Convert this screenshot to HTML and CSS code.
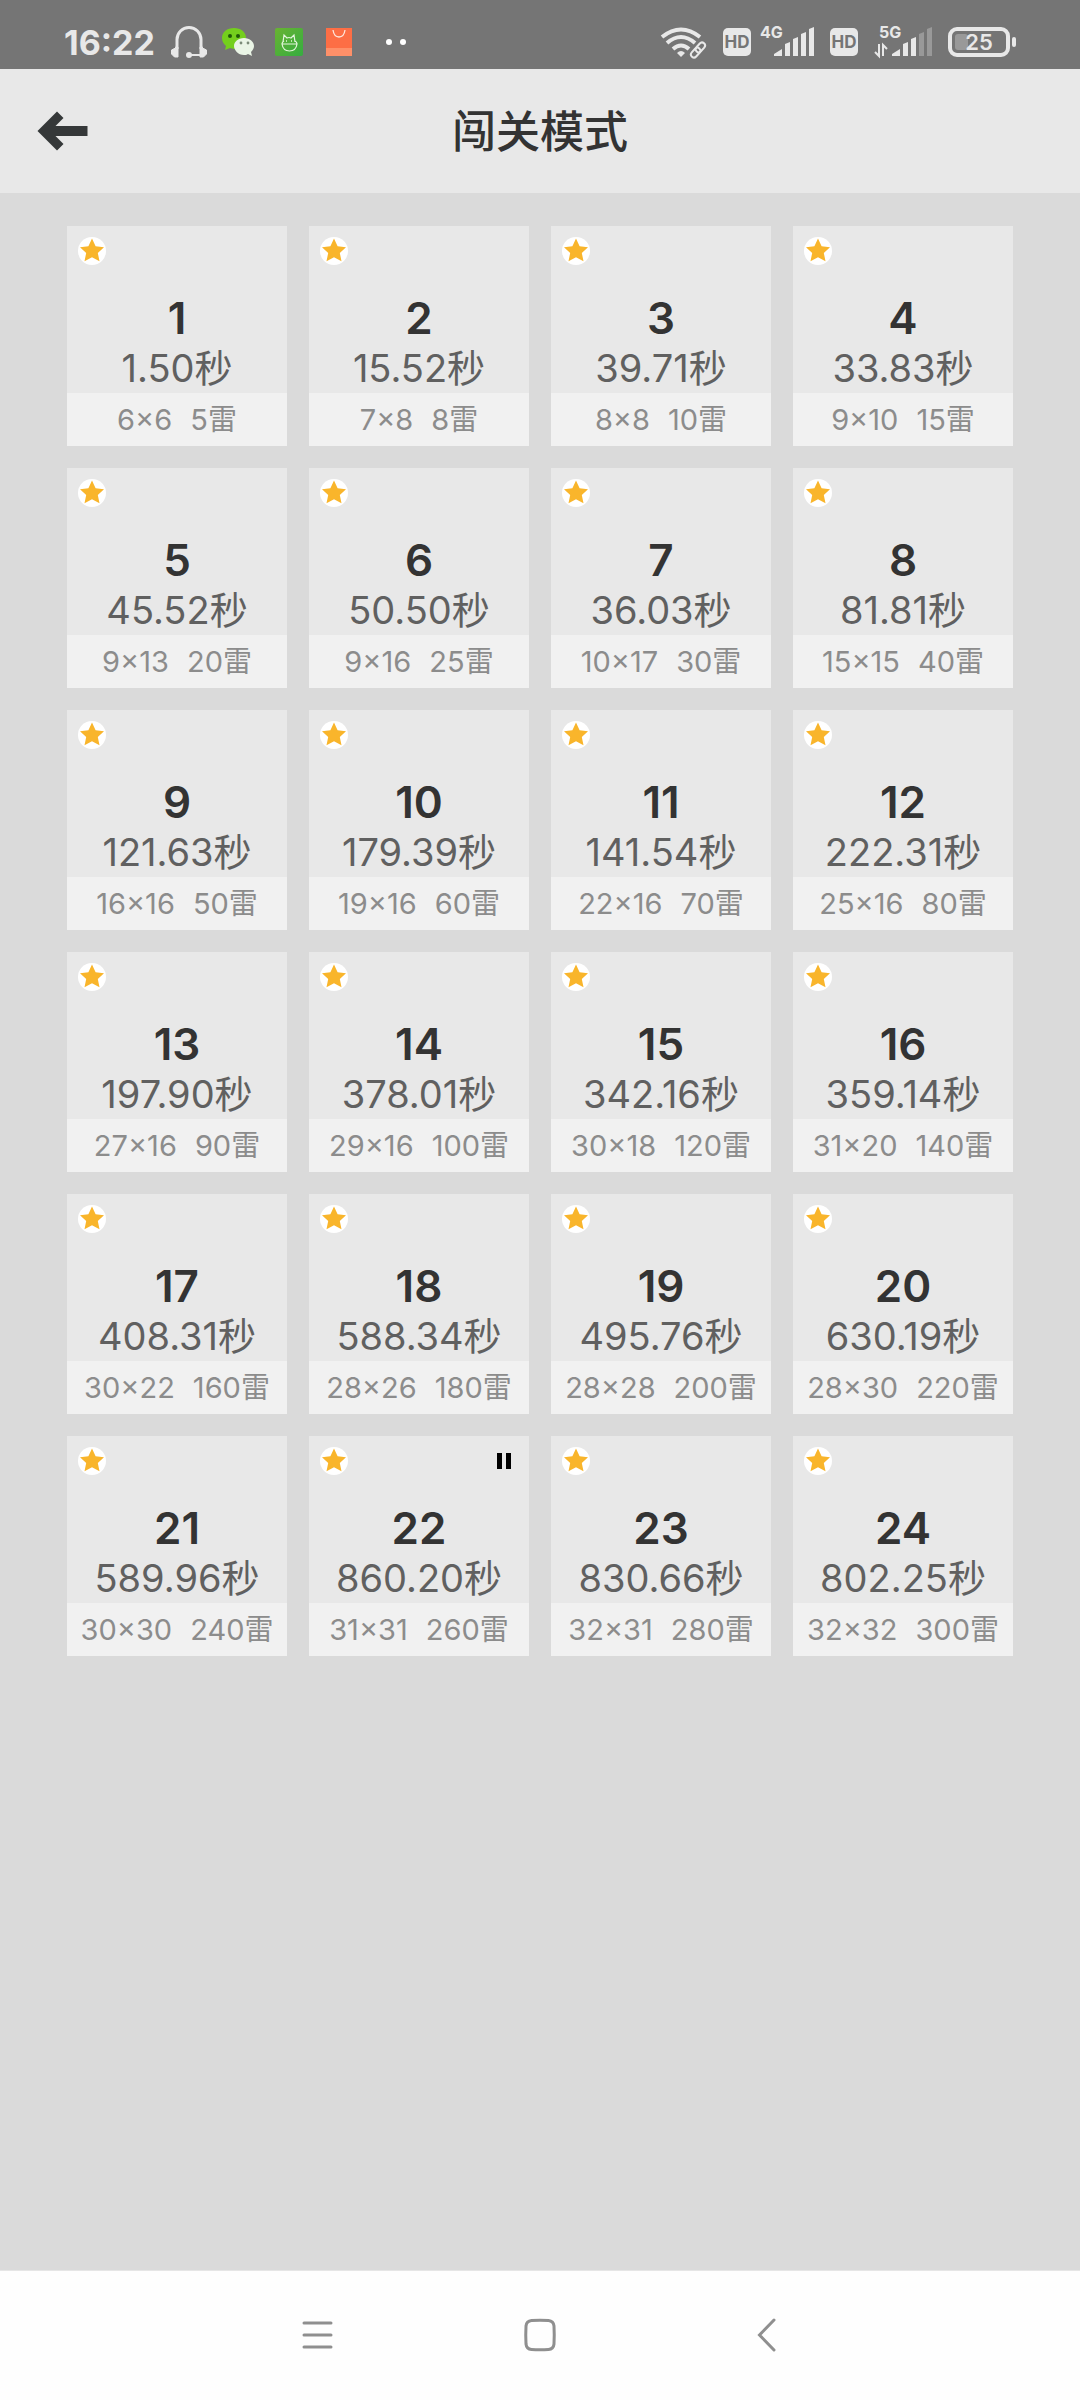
FILE: index.html
```html
<!DOCTYPE html>
<html lang="zh-CN">
<head>
  <meta charset="UTF-8" />
  <meta name="viewport" content="width=device-width, initial-scale=1.0"/>
  <title>闯关模式</title>
  <link rel="stylesheet" href="styles.css">
</head>
<body>
  <div class="status-bar">
    <div class="status-left">
      <span class="clock">16:22</span>
      <!-- headset -->
      <svg width="36" height="34" viewBox="0 0 36 34">
        <path d="M6 24V14.500a12 12 0 0 1 24 0V24" fill="none" stroke="#e8e8e8" stroke-width="3"/>
        <path d="M4.500 22H7v10H3.500L0.500 29v-4l4-2zM31.500 22H29v10h3.500l3-3v-4l-4-2z" fill="#e8e8e8" stroke="#e8e8e8" stroke-linejoin="round"/>
        <path d="M18 30h13" stroke="#e8e8e8" stroke-width="2"/>
        <circle cx="18" cy="30" r="3" fill="#e8e8e8"/>
      </svg>
      <!-- wechat -->
      <svg width="36" height="34" viewBox="0 0 36 34">
        <path d="M13 3C6 3 1 7 1 13c0 4 2 6 4 8l-1 4 5-2c1 0 3 1 4 1 7 0 12-5 12-11S20 3 13 3z" fill="#74cf1d"/>
        <circle cx="9" cy="11" r="2" fill="#1f5a08"/>
        <circle cx="17" cy="11" r="2" fill="#1f5a08"/>
        <path d="M23 13c-6 0-10 4-10 8s4 9 10 9c1 0 3 0 4-1l4 2-1-4c2-2 3-4 3-6 0-4-4-8-10-8z" fill="#eaf5e6"/>
        <circle cx="20" cy="18" r="1.4" fill="#7b8b78"/>
        <circle cx="27" cy="18" r="1.4" fill="#7b8b78"/>
      </svg>
      <!-- green cat app -->
      <svg width="36" height="34" viewBox="0 0 36 34">
        <defs>
          <linearGradient id="green" x1="0" y1="0" x2="1" y2="1">
            <stop offset="0" stop-color="#69b332"/>
            <stop offset="1" stop-color="#35ad40"/>
          </linearGradient>
        </defs>
        <rect x="4" y="3" width="28" height="28" rx="2" fill="url(#green)"/>
        <path d="M12 17l1-7 3 3q2-1 4 0l3-3 1 7M11 19h15q-1 7-7.500 7T11 19zM11 19q0-2 2-3M26 19q0-2-2-3" fill="none" stroke="#e4f5dc" stroke-width="1.200"/>
        <path d="M15 16h1M20 16h1" stroke="#e4f5dc" stroke-width="1.500"/>
      </svg>
      <!-- shopping bag app -->
      <svg width="36" height="34" viewBox="0 0 36 34">
        <path d="M5 3h26v28H5z" fill="#fd6e45"/>
        <path d="M5 23h26v8H5z" fill="#fe9069"/>
        <path d="M12 5q1 7 6 7t6-7" fill="none" stroke="#ffe6dc" stroke-width="1.300"/>
      </svg>
      <svg width="50" height="34" viewBox="0 0 50 34">
        <circle cx="18" cy="17" r="3" fill="#fff"/>
        <circle cx="32" cy="17" r="3" fill="#fff"/>
      </svg>
    </div>
    <div class="status-right">
      <!-- wifi with link badge -->
      <svg width="54" height="34" viewBox="0 0 54 34">
        <path d="M2 12q19-15 38 0" fill="none" stroke="#e8e8e8" stroke-width="4"/>
        <path d="M7 18q14-12 28 0M13 24q8-7 16 0" fill="none" stroke="#e8e8e8" stroke-width="4"/>
        <path d="M21 32l-4-4q4-4 8 0z" fill="#e8e8e8"/>
        <g fill="none" stroke="#e8e8e8" stroke-width="2" transform="rotate(-48 38 25)">
          <rect x="29" y="22" width="11" height="6" rx="3"/>
          <rect x="36" y="22" width="11" height="6" rx="3"/>
        </g>
      </svg>
      <span class="hd">HD</span>
      <svg width="61" height="46" viewBox="0 -6 61 46">
        <text class="net" x="0" y="13">4G</text>
        <path d="M14 31v-2l8-5v7zM25 31V19l5-2v14zM33 31V14l5-2v19zM41 31V9l5-2v24zM49 31V4l5-2v29z" fill="#e8e8e8"/>
      </svg>
      <span class="hd">HD</span>
      <svg width="72" height="46" viewBox="0 -6 72 46">
        <text class="net" x="12" y="13">5G</text>
        <path d="M12 19v12l-4-4M16 31V20l4 4" fill="none" stroke="#e8e8e8" stroke-width="2"/>
        <path d="M25 31v-2l8-5v7zM36 31V19l5-2v14zM44 31V14l5-2v19z" fill="#e8e8e8"/>
        <path d="M52 31V9l5-2v24zM60 31V4l5-2v29z" fill="#999"/>
      </svg>
      <!-- battery -->
      <svg width="68" height="34" viewBox="0 0 68 34">
        <rect x="2" y="4" width="58" height="26" rx="7" fill="none" stroke="#e8e8e8" stroke-width="4"/>
        <rect x="7" y="9" width="13" height="16" rx="3" fill="#999"/>
        <rect x="64" y="12" width="4" height="10" rx="2" fill="#e8e8e8"/>
        <text class="battery-level" x="31" y="25">25</text>
      </svg>
    </div>
  </div>

  <div class="header">
    <button class="back" aria-label="返回">
      <svg width="52" height="40" viewBox="0 0 52 40">
        <path d="M0.500 20L20 0.500l6.500 6.500-8 8h32v10H18.500l8 8-6.500 6.500z" fill="#353839"/>
      </svg>
    </button>
    <h1>闯关模式</h1>
  </div>

  <div class="levels" id="levels"></div>

  <div class="nav-bar">
    <button aria-label="菜单">
      <svg width="42" height="34" viewBox="0 0 42 34">
        <path d="M7 5h27M7 17h27M7 29h27" stroke="#8f8f8f" stroke-width="3" stroke-linecap="round"/>
      </svg>
    </button>
    <button aria-label="主页">
      <svg width="42" height="34" viewBox="0 0 42 34">
        <path d="M7 8Q7.500 3 12.500 2.500Q21 1.800 29.500 2.500Q34.500 3 35 8Q35.500 17 35 26Q34.500 31 29.500 31.500Q21 32.200 12.500 31.500Q7.500 31 7 26Q6.500 17 7 8z" fill="none" stroke="#8f8f8f" stroke-width="3"/>
      </svg>
    </button>
    <button aria-label="返回">
      <svg width="42" height="34" viewBox="0 0 42 34">
        <path d="M33 2L18.500 17L33 32" fill="none" stroke="#8f8f8f" stroke-width="3" stroke-linecap="round"/>
      </svg>
    </button>
  </div>

<script>
// [best time, board size, mines]
const levels = [
  ["1.50", "6×6", 5], ["15.52", "7×8", 8], ["39.71", "8×8", 10], ["33.83", "9×10", 15],
  ["45.52", "9×13", 20], ["50.50", "9×16", 25], ["36.03", "10×17", 30], ["81.81", "15×15", 40],
  ["121.63", "16×16", 50], ["179.39", "19×16", 60], ["141.54", "22×16", 70], ["222.31", "25×16", 80],
  ["197.90", "27×16", 90], ["378.01", "29×16", 100], ["342.16", "30×18", 120], ["359.14", "31×20", 140],
  ["408.31", "30×22", 160], ["588.34", "28×26", 180], ["495.76", "28×28", 200], ["630.19", "28×30", 220],
  ["589.96", "30×30", 240], ["860.20", "31×31", 260], ["830.66", "32×31", 280], ["802.25", "32×32", 300]
];
const pausedLevel = 22;

const star = `<svg class="star" width="28" height="28" viewBox="0 0 28 28">
  <circle cx="14" cy="14" r="14" fill="#fff"/>
  <path d="M14 1.500l3.600 7.700 8.400 1-6.200 5.700 1.700 8.300-7.500-4-7.500 4 1.700-8.300L2 10.200l8.400-1z" fill="#f9b52b"/>
</svg>`;
const pause = `<svg class="pause" width="14" height="16" viewBox="0 0 14 16"><path d="M0 0h5v16H0zM9 0h5v16H9z"/></svg>`;

document.getElementById("levels").innerHTML = levels.map(([time, size, mines], i) => `
  <button class="level">
    ${star}
    ${i + 1 === pausedLevel ? pause : ""}
    <span class="number">${i + 1}</span>
    <span class="time">${time}秒</span>
    <span class="info"><span>${size}</span><span>${mines}雷</span></span>
  </button>`).join("");
</script>

</body>
</html>
```

FILE: styles.css
```css
* {
  box-sizing: border-box;
}

body {
  font-family: Inter, "Noto Sans CJK SC", sans-serif;
  background-color: #dadada;
  color: #333;
  display: flex;
  flex-direction: column;
  margin: 0;
  min-height: 100vh;
}

button {
  font-family: inherit;
  color: inherit;
  background: none;
  border: none;
  padding: 0;
  cursor: pointer;
}

svg {
  display: block;
  flex-shrink: 0;
}

.status-bar {
  display: flex;
  justify-content: space-between;
  height: 69px;
  padding: 16px 64px 0;
  background-color: #757575;
  color: #e8e8e8;
}

.status-left,
.status-right {
  display: flex;
  align-items: center;
  height: 52px;
}

.status-left {
  gap: 14px;
}

.status-right {
  gap: 9px;
}

.clock {
  font-size: 34px;
  font-weight: 700;
  width: 93px;
}

.hd {
  width: 28px;
  height: 28px;
  line-height: 28px;
  border-radius: 5px;
  background-color: #e8e8e8;
  color: #757575;
  font-size: 17px;
  font-weight: 700;
  text-align: center;
}

.net {
  font-size: 16px;
  font-weight: 700;
  fill: #e8e8e8;
}

.battery-level {
  font-size: 22px;
  font-weight: 600;
  text-anchor: middle;
  fill: #e8e8e8;
}

.header {
  position: relative;
  display: flex;
  align-items: center;
  justify-content: center;
  height: 124px;
  background-color: #e8e8e8;
}

.header h1 {
  font-size: 44px;
  font-weight: 500;
  margin: 0;
  padding-bottom: 4px;
}

.back {
  position: absolute;
  left: 37px;
}

.levels {
  flex: 1;
  display: grid;
  grid-template-columns: repeat(4, 1fr);
  align-content: start;
  gap: 22px;
  padding: 33px 67px;
}

.level {
  position: relative;
  display: flex;
  flex-direction: column;
  justify-content: flex-end;
  height: 220px;
  background-color: #e8e8e8;
  text-align: center;
}

.star {
  position: absolute;
  top: 11px;
  left: 11px;
}

.pause {
  position: absolute;
  top: 17px;
  right: 18px;
}

.number,
.time {
  line-height: 50px;
}

.number {
  font-size: 44px;
  font-weight: 600;
}

.time {
  font-size: 38px;
  color: #606060;
}

.info {
  display: flex;
  justify-content: center;
  gap: 18px;
  padding-top: 1px;
  font-size: 29px;
  line-height: 52px;
  color: #8c8c8c;
  background-color: #f1f1f1;
}

.nav-bar {
  display: flex;
  justify-content: center;
  align-items: center;
  gap: 180px;
  height: 130px;
  padding-bottom: 2px;
  background-color: #fefefe;
  border-top: 1px solid #e6e6e6;
}
```
